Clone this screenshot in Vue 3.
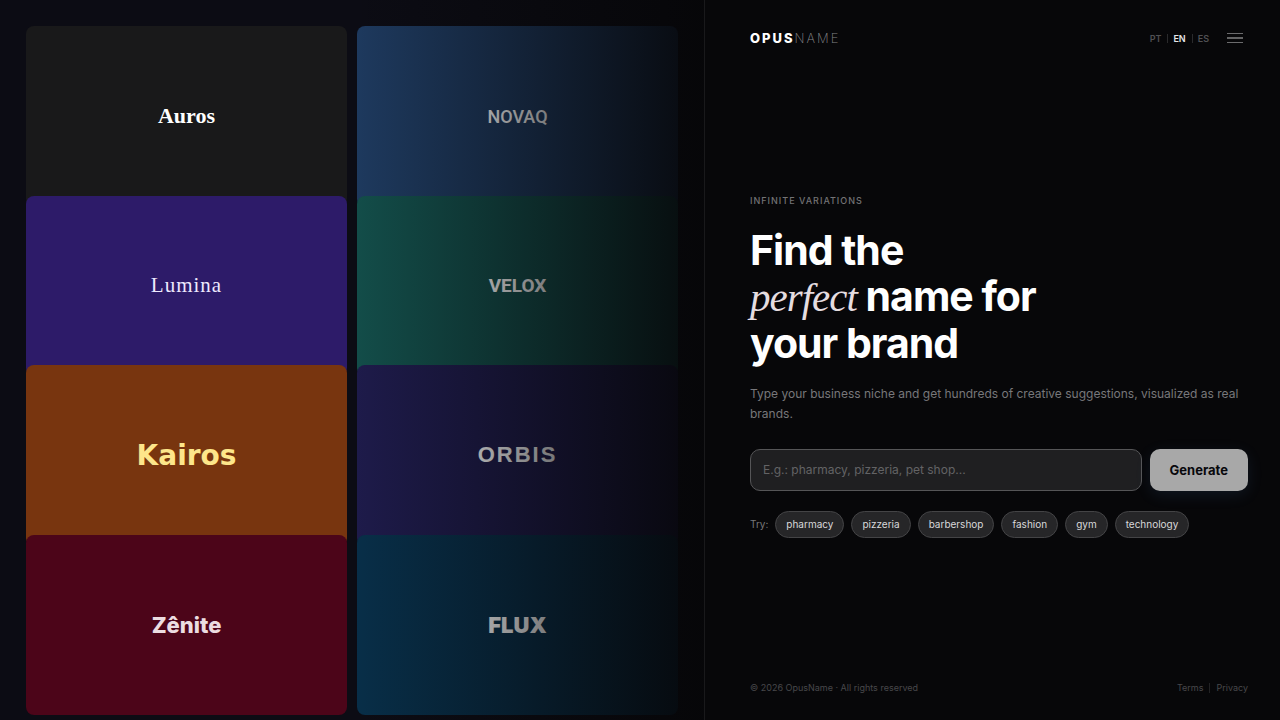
<script setup>
import { ref } from 'vue'

const brands = [
  { name: 'Auros', id: 'auros' },
  { name: 'NOVAQ', id: 'novaq' },
  { name: 'Lumina', id: 'lumina' },
  { name: 'VELOX', id: 'velox' },
  { name: 'Kairos', id: 'kairos' },
  { name: 'ORBIS', id: 'orbis' },
  { name: 'Zênite', id: 'zenite' },
  { name: 'FLUX', id: 'flux' },
]
const languages = ['PT', 'EN', 'ES']
const language = ref('EN')
const suggestions = ['pharmacy', 'pizzeria', 'barbershop', 'fashion', 'gym', 'technology']
const niche = ref('')
</script>

<template>
  <div class="page">
    <section class="showcase" aria-label="Brand examples">
      <div v-for="b in brands" :key="b.id" class="cell">
        <div class="card" :class="b.id">{{ b.name }}</div>
      </div>
    </section>

    <div class="panel">
      <header class="header">
        <a href="#" class="logo"><strong>OPUS</strong><span>NAME</span></a>
        <div class="actions">
          <nav class="langs" aria-label="Language">
            <button
              v-for="l in languages"
              :key="l"
              type="button"
              :class="{ active: l === language }"
              @click="language = l"
            >{{ l }}</button>
          </nav>
          <button type="button" class="menu" aria-label="Menu">
            <svg width="16" height="12" viewBox="0 0 16 12" aria-hidden="true">
              <path d="M0 1.5H16M0 10.5H16" stroke="#6b6b6d" />
              <path d="M0 6H16" stroke="#8b8b8d" stroke-width="1.4" />
            </svg>
          </button>
        </div>
      </header>

      <main class="hero">
        <p class="eyebrow">INFINITE VARIATIONS</p>
        <h1>Find the<br /><em>perfect</em> name for<br />your brand</h1>
        <p class="lead">
          Type your business niche and get hundreds of creative suggestions, visualized as real brands.
        </p>
        <form class="search" @submit.prevent>
          <input
            v-model="niche"
            type="text"
            aria-label="Business niche"
            placeholder="E.g.: pharmacy, pizzeria, pet shop..."
          />
          <button type="submit">Generate</button>
        </form>
        <div class="try">
          <span>Try:</span>
          <button v-for="s in suggestions" :key="s" type="button" @click="niche = s">{{ s }}</button>
        </div>
      </main>

      <footer class="footer">
        <span>© 2026 OpusName · All rights reserved</span>
        <nav aria-label="Legal">
          <a href="#">Terms</a>
          <a href="#">Privacy</a>
        </nav>
      </footer>
    </div>
  </div>
</template>

<style>
body {
  background: #070709;
}
</style>

<style scoped>
* {
  box-sizing: border-box;
}
.page {
  display: grid;
  grid-template-columns: 55fr 45fr;
  height: 100vh;
  overflow: hidden;
  background: #070709;
  color: #fff;
  font-family: Inter, sans-serif;
}
button {
  font-family: inherit;
  cursor: pointer;
}

.showcase {
  position: relative;
  display: grid;
  grid-template-columns: 1fr 1fr;
  grid-template-rows: repeat(4, minmax(0, 1fr));
  gap: 10px;
  padding: 26px;
  min-height: 0;
  background: #0c0c14;
}
.showcase::after {
  content: '';
  position: absolute;
  inset: 0;
  background: linear-gradient(to right, transparent 50%, rgba(6, 6, 8, 0.94) 100%);
}
.cell {
  min-height: 0;
}
.card {
  display: flex;
  align-items: center;
  justify-content: center;
  aspect-ratio: 16 / 9;
  border-radius: 8px;
  font-size: 22px;
}
.auros {
  background: #19191a;
  font-family: 'Liberation Serif', serif;
  font-weight: 700;
}
.novaq {
  background: #1e3a5f;
  font-family: Roboto, sans-serif;
  font-size: 18px;
  font-weight: 500;
}
.lumina {
  background: #2d1b69;
  color: #ede9fe;
  font-family: 'Liberation Serif', serif;
  font-size: 21px;
  letter-spacing: 1px;
}
.velox {
  background: #134e4a;
  font-family: Roboto, sans-serif;
  font-size: 19px;
  font-weight: 700;
}
.kairos {
  background: #78350f;
  color: #fde68a;
  font-family: 'DejaVu Sans', sans-serif;
  font-size: 28px;
  font-weight: 700;
}
.orbis {
  background: #1e1b4b;
  font-family: 'Liberation Sans', sans-serif;
  font-weight: 700;
  letter-spacing: 2px;
}
.zenite {
  background: #4c0519;
  color: #ecdde1;
  font-weight: 800;
}
.flux {
  background: #082f49;
  font-weight: 900;
}

.panel {
  display: flex;
  flex-direction: column;
  min-width: 0;
  padding: 26px 32px 24px 45px;
  border-left: 1px solid #19191b;
}
.header {
  display: flex;
  align-items: center;
  justify-content: space-between;
  height: 24px;
}
.logo {
  color: #fff;
  font-size: 13px;
  letter-spacing: 2px;
  text-decoration: none;
}
.logo strong {
  font-weight: 800;
}
.logo span {
  color: #858588;
  font-weight: 200;
}
.actions {
  display: flex;
  align-items: center;
  gap: 13px;
}
.langs {
  display: flex;
}
.langs button {
  height: 9px;
  padding: 0 6px 0 5px;
  border: 0;
  border-left: 1px solid #2a2a2c;
  background: none;
  color: #505053;
  font-size: 9px;
  font-weight: 600;
  line-height: 9px;
}
.langs button:first-child {
  border-left: 0;
}
.langs button:last-child {
  padding-right: 0;
}
.langs .active {
  color: #e6e6e8;
}
.menu {
  display: flex;
  align-items: center;
  justify-content: center;
  width: 26px;
  height: 24px;
  padding: 0;
  border: 0;
  background: none;
}

.hero {
  flex: 1;
  display: flex;
  flex-direction: column;
  justify-content: center;
}
.eyebrow {
  margin: 0 0 18px;
  color: #737375;
  font-size: 9px;
  font-weight: 500;
  line-height: 16px;
  letter-spacing: 1px;
}
h1 {
  margin: 0 0 18px;
  font-size: 41px;
  font-weight: 700;
  line-height: 46px;
  letter-spacing: -1px;
}
h1 em {
  color: #e5dde0;
  font-family: 'Liberation Serif', serif;
  font-weight: 400;
}
.lead {
  margin: 0 0 25px;
  color: #77777a;
  font-size: 12px;
  line-height: 20px;
}
.search {
  display: flex;
  gap: 8px;
  margin-bottom: 20px;
}
.search input {
  flex: 1;
  min-width: 0;
  height: 42px;
  padding: 0 12px;
  border: 1px solid #555557;
  border-radius: 10px;
  outline: 0;
  background: #1f1f21;
  color: #fff;
  font-family: inherit;
  font-size: 12px;
}
.search input::placeholder {
  color: #636365;
  opacity: 1;
}
.search button {
  height: 42px;
  padding: 0 20px;
  border: 0;
  border-radius: 10px;
  background: #a8a8a8;
  box-shadow: 0 4px 16px rgba(96, 165, 250, 0.1);
  color: #08080c;
  font-size: 13px;
  font-weight: 700;
}
.try {
  display: flex;
  flex-wrap: wrap;
  align-items: center;
  gap: 7px;
  color: #77777a;
  font-size: 10px;
}
.try button {
  height: 27px;
  padding: 0 10px;
  border: 1px solid #444446;
  border-radius: 14px;
  background: #262628;
  color: #d8d8da;
  font-size: 10px;
}

.footer {
  display: flex;
  align-items: center;
  justify-content: space-between;
  color: #48484b;
  font-size: 9px;
  line-height: 16px;
}
.footer nav {
  display: flex;
  align-items: center;
}
.footer a {
  color: inherit;
  line-height: 10px;
  text-decoration: none;
}
.footer a + a {
  margin-left: 6px;
  padding-left: 6px;
  border-left: 1px solid #222224;
}
</style>
